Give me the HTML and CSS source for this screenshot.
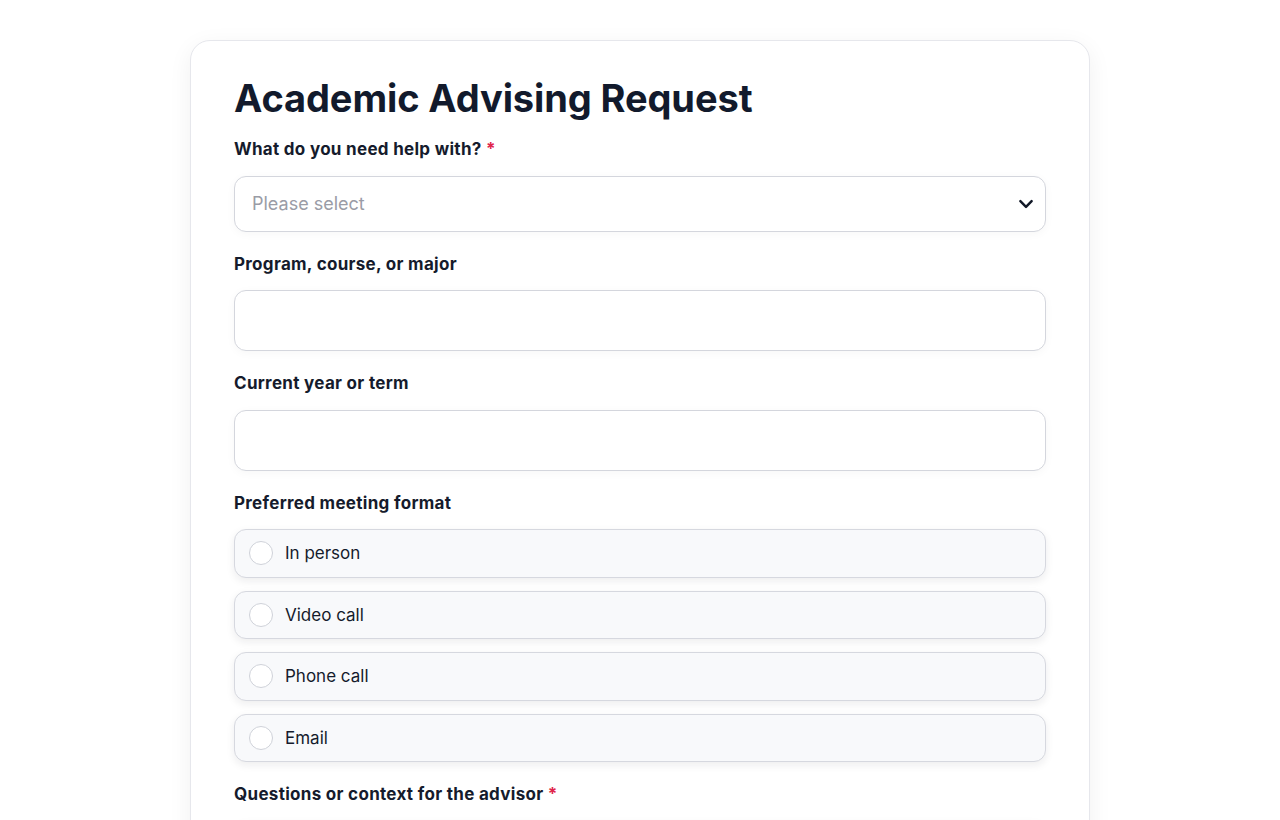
FILE: index.html
```html
<!DOCTYPE html>
<html lang="en">
<head>
    <meta charset="UTF-8">
    <meta name="viewport" content="width=device-width, initial-scale=1.0">
    <title>Academic Advising Request</title>
    <link rel="stylesheet" href="styles.css">
</head>
<body>
    <div class="card">
        <h1 class="title">Academic Advising Request</h1>

        <div class="field">
            <label class="label" for="helpWith">What do you need help with? <span class="req">*</span></label>
            <div class="select-wrap">
                <select id="helpWith" class="select">
                    <option>Please select</option>
                    <option>Course selection</option>
                    <option>Degree planning</option>
                    <option>Changing major</option>
                    <option>Academic difficulty</option>
                </select>
                <svg class="chevron" viewBox="0 0 16 16" width="18" height="18">
                    <path d="M3 5.5 L8 10.5 L13 5.5" fill="none" stroke="#111827" stroke-width="2.2" stroke-linecap="round" stroke-linejoin="round"/>
                </svg>
            </div>
        </div>

        <div class="field">
            <label class="label" for="program">Program, course, or major</label>
            <input type="text" id="program" class="input">
        </div>

        <div class="field">
            <label class="label" for="term">Current year or term</label>
            <input type="text" id="term" class="input">
        </div>

        <div class="field">
            <div class="label">Preferred meeting format</div>
            <div class="options">
                <label class="option"><input type="radio" name="format"><span class="dot"></span>In person</label>
                <label class="option"><input type="radio" name="format"><span class="dot"></span>Video call</label>
                <label class="option"><input type="radio" name="format"><span class="dot"></span>Phone call</label>
                <label class="option"><input type="radio" name="format"><span class="dot"></span>Email</label>
            </div>
        </div>

        <div class="field">
            <label class="label" for="context">Questions or context for the advisor <span class="req">*</span></label>
            <textarea id="context" class="input textarea" rows="5"></textarea>
        </div>
    </div>
</body>
</html>
```

FILE: styles.css
```css
body {
    margin: 0;
    padding: 40px 0 60px;
    background-color: #fff;
    font-family: Inter, "Noto Sans", Arial, sans-serif;
    color: #151b2c;
}

.card {
    width: 900px;
    box-sizing: border-box;
    margin: 0 auto;
    padding: 30px 43px 40px;
    background-color: #fff;
    border: 1px solid #e6e7ec;
    border-radius: 20px;
    box-shadow: 0 6px 24px rgba(20, 25, 40, 0.06);
}

.title {
    margin: 0 0 12px;
    font-size: 38px;
    line-height: 54px;
    font-weight: 700;
    letter-spacing: -0.1px;
    color: #121a2c;
}

.field {
    margin-bottom: 20px;
}

.label {
    display: block;
    font-size: 17px;
    line-height: 24px;
    font-weight: 700;
    letter-spacing: 0.3px;
    color: #151b2c;
    margin-bottom: 14.5px;
}

.req {
    color: #e0244b;
}

.select-wrap {
    position: relative;
}

.select, .input {
    display: block;
    width: 100%;
    box-sizing: border-box;
    border: 1px solid #d4d6dd;
    border-radius: 12px;
    background-color: #fff;
    font-family: inherit;
    font-size: 18px;
    color: #151b2c;
    box-shadow: 0 2px 10px rgba(20, 25, 40, 0.035);
    outline: none;
}

.select {
    height: 56px;
    padding: 0 48px 0 17px;
    color: #9a9ca6;
    appearance: none;
    -webkit-appearance: none;
}

.input {
    height: 61px;
    padding: 0 17px;
}

.textarea {
    height: 130px;
    padding: 14px 17px;
    resize: vertical;
}

.chevron {
    position: absolute;
    right: 11px;
    top: 19px;
    pointer-events: none;
}

.options {
    display: flex;
    flex-direction: column;
    gap: 13px;
}

.option {
    display: flex;
    align-items: center;
    height: 48.5px;
    box-sizing: border-box;
    padding: 0 14px;
    border: 1px solid #d6d8df;
    border-radius: 12px;
    background-color: #f8f9fb;
    box-shadow: 0 3px 8px rgba(20, 25, 40, 0.08);
    font-size: 17px;
    color: #151b2c;
    cursor: pointer;
}

.option input {
    display: none;
}

.dot {
    width: 22px;
    height: 22px;
    border: 1px solid #cfd2d9;
    border-radius: 50%;
    background-color: #fff;
    margin-right: 12px;
    flex-shrink: 0;
}

.option input:checked + .dot {
    border: 7px solid #151b2c;
    box-sizing: border-box;
}
```
